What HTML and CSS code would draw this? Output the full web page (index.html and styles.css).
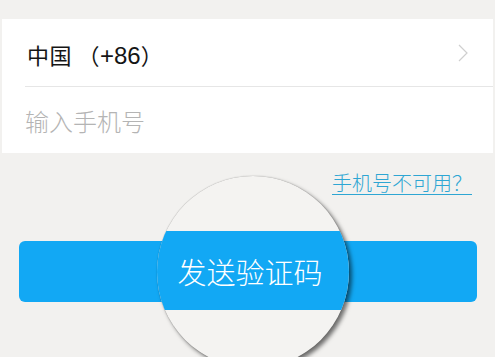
FILE: index.html
```html
<!DOCTYPE html>
<html lang="zh-CN">
<head>
<meta charset="utf-8">
<link rel="stylesheet" href="styles.css">
</head>
<body>
<div class="page">
  <div class="panel">
    <div class="row row-country">
      <span class="country">中国 （<span class="code">+86</span>）</span>
      <svg class="chevron" width="12" height="20" viewBox="0 0 12 20"><path d="M2 2 L10 10 L2 18" fill="none" stroke="#cfcfcf" stroke-width="1.2"/></svg>
    </div>
    <div class="row row-phone">
      <span class="placeholder">输入手机号</span>
    </div>
  </div>
  <div class="link-row">
    <a class="link">手机号不可用？</a>
  </div>
  <div class="btn-wrap">
    <div class="btn"></div>
  </div>
  <div class="magnifier">
    <div class="mag-band">发送验证码</div>
  </div>
</div>
</body>
</html>
```
FILE: styles.css
```css
* { box-sizing: border-box; }
html, body {
  margin: 0;
  padding: 0;
  background: #f2f1ef;
  font-family: "Noto Sans CJK SC", "Noto Sans", sans-serif;
  font-weight: 300;
}
.page {
  position: relative;
  width: 495px;
  height: 357px;
  overflow: hidden;
  padding-top: 19px;
}
.panel {
  background: #ffffff;
  margin: 0 2px;
  padding-left: 23px;
}
.row {
  display: flex;
  align-items: center;
}
.row-country {
  height: 68px;
  padding-right: 24px;
  justify-content: space-between;
  border-bottom: 1px solid #e6e6e6;
  padding-top: 3px;
}
.country {
  font-size: 22px;
  font-weight: 400;
  color: #151515;
  margin-left: 2px;
  letter-spacing: 0.5px;
}
.code {
  font-family: "Liberation Sans", sans-serif;
  font-size: 24px;
  font-weight: 400;
  letter-spacing: 0;
}
.chevron { display: block; margin-top: -2px; }
.row-phone {
  height: 66px;
}
.placeholder {
  font-size: 24px;
  color: #b4b4b4;
}
.link-row {
  display: flex;
  justify-content: flex-end;
  padding-right: 23px;
  margin-top: 17px;
}
.link {
  font-size: 20px;
  line-height: 26px;
  color: #2ea6d3;
  text-decoration: underline;
  text-underline-offset: 3px;
  text-decoration-thickness: 1px;
}
.btn-wrap {
  padding: 0 18px 0 19px;
  margin-top: 45px;
}
.btn {
  height: 61px;
  border-radius: 6px;
  background: #12a8f4;
}
.magnifier {
  position: absolute;
  left: 157px;
  top: 176px;
  width: 192px;
  height: 192px;
  border-radius: 50%;
  overflow: hidden;
  background: #f4f3f1;
  box-shadow: 3px 3px 4px rgba(0, 0, 0, 0.55), 0 0 1px rgba(0,0,0,0.4);
}
.mag-band {
  position: absolute;
  left: 0;
  right: 0;
  top: 55px;
  height: 79px;
  background: #12a8f4;
  color: #ffffff;
  font-size: 29px;
  display: flex;
  align-items: center;
  justify-content: center;
  padding-right: 6px;
}
```
